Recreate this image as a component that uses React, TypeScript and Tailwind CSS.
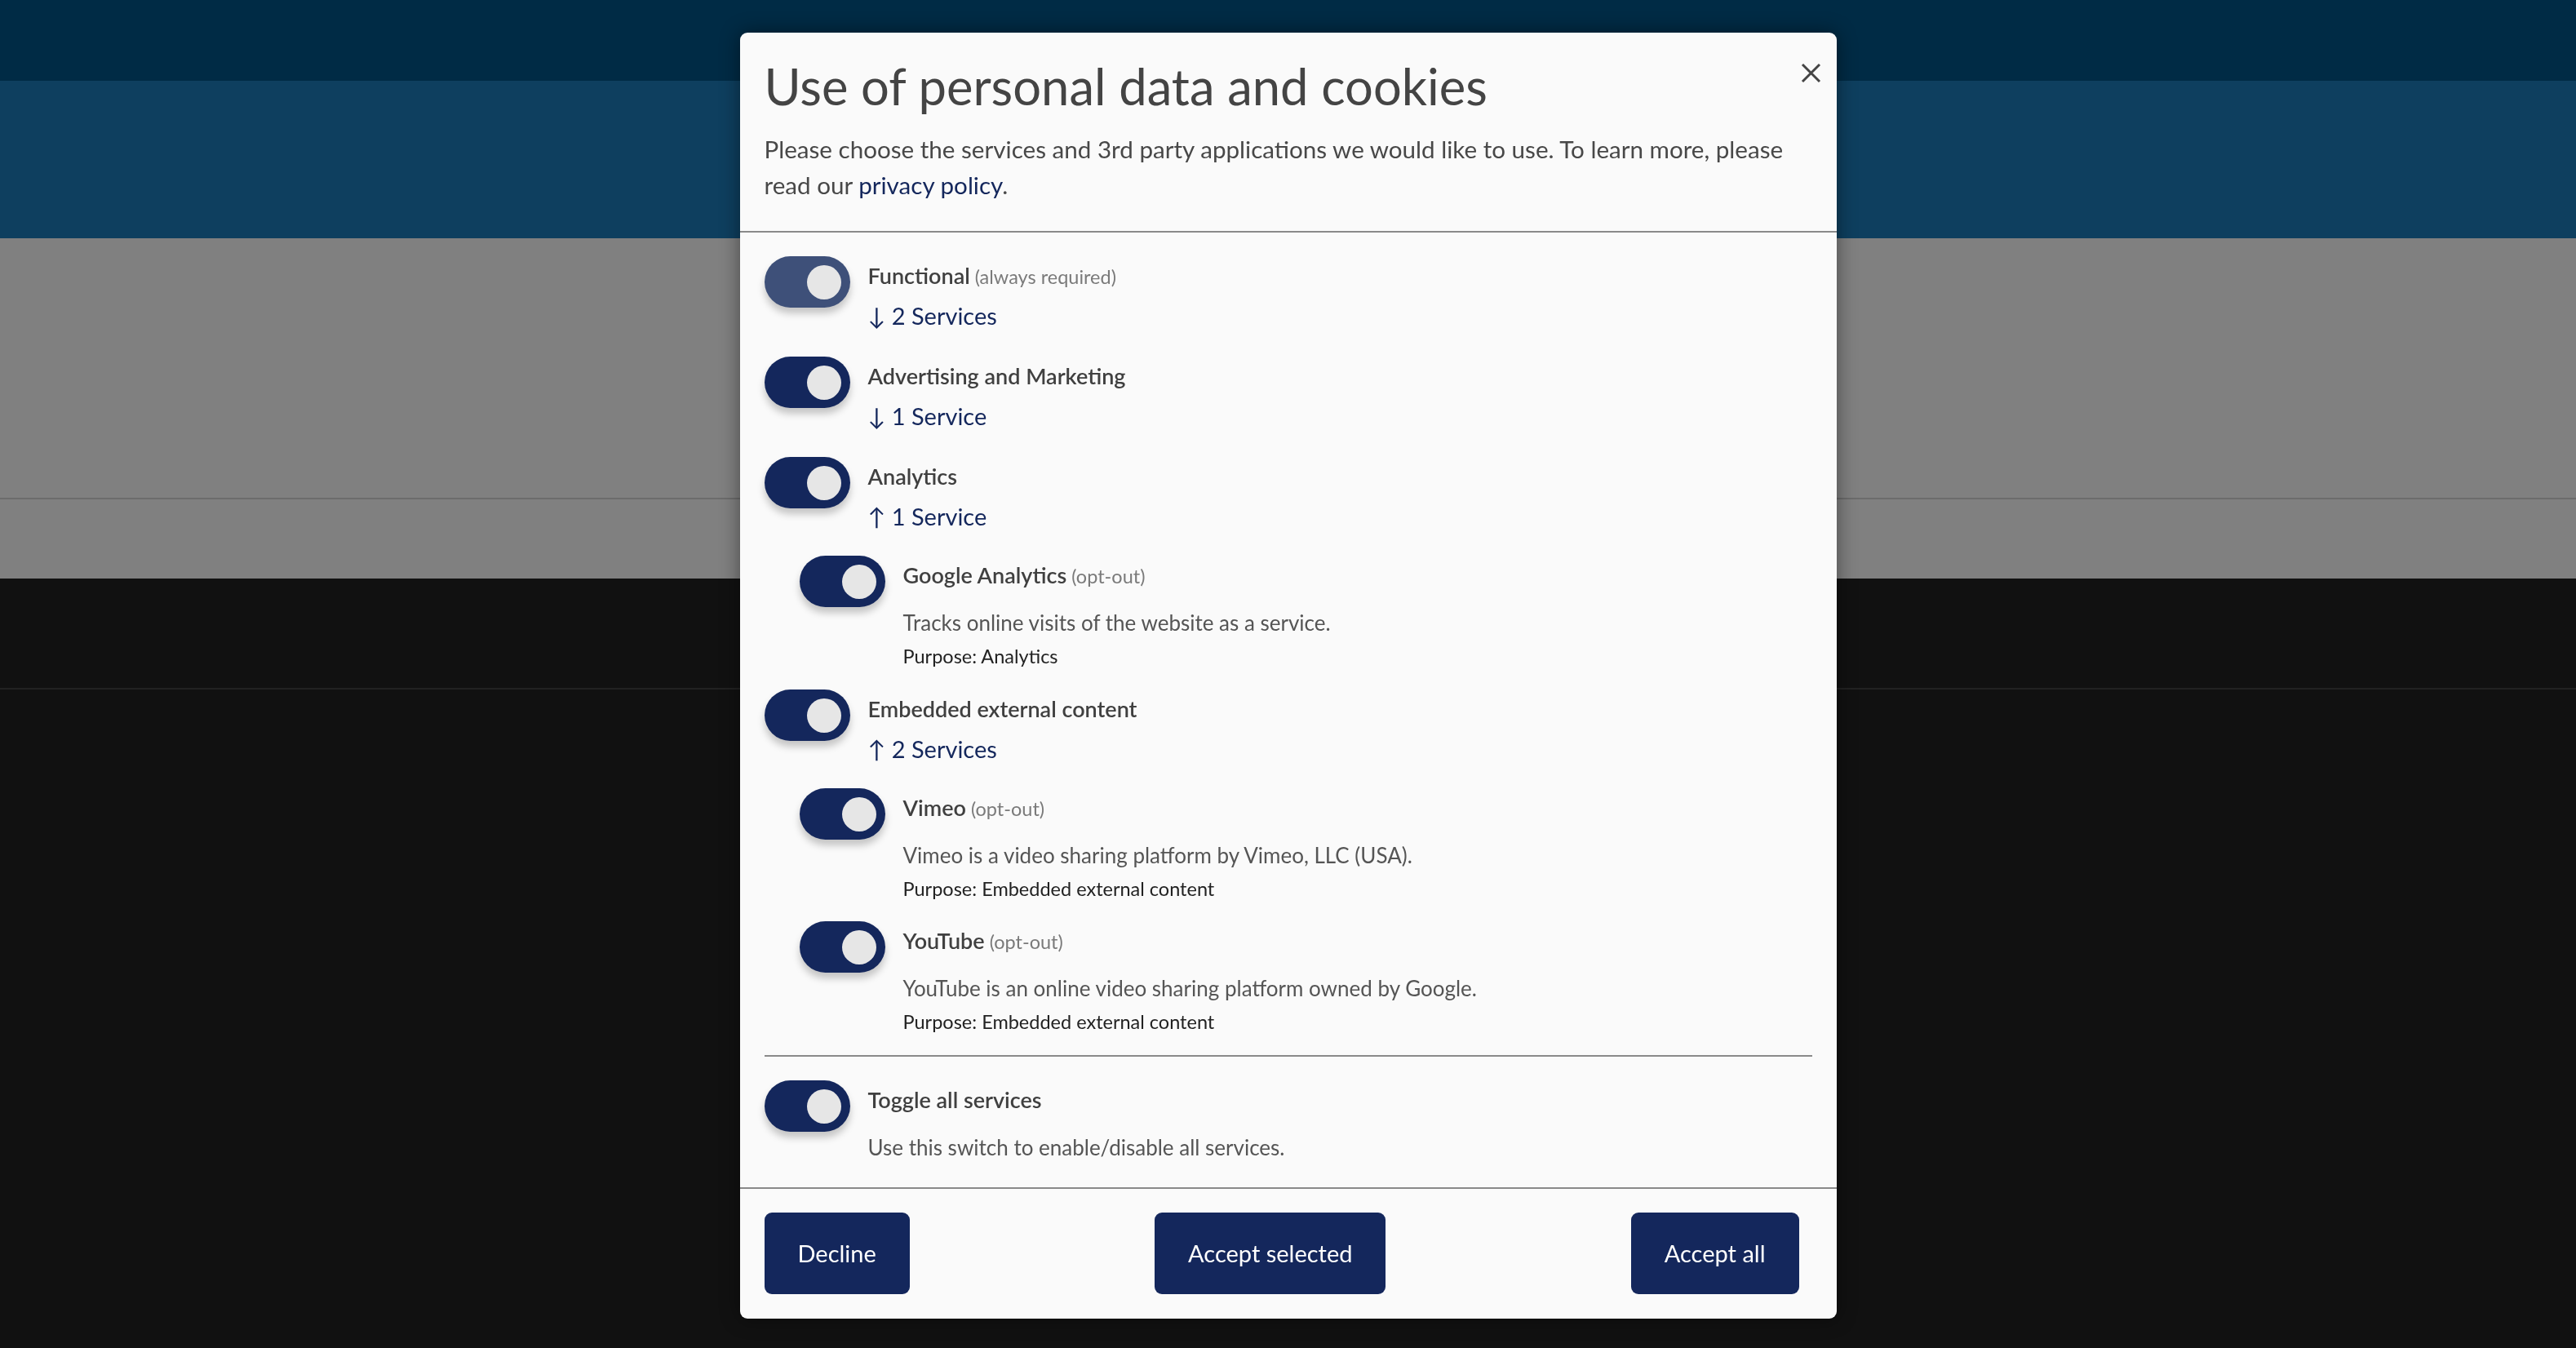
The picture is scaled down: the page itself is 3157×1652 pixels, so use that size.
import { ReactNode } from 'react'

type Service = {
  name: string
  description: string
  purpose: string
}

type Category = {
  title: string
  note?: string
  count: string
  locked?: boolean
  services?: Service[]
}

const categories: Category[] = [
  { title: 'Functional', note: '(always required)', count: '2 Services', locked: true },
  { title: 'Advertising and Marketing', count: '1 Service' },
  {
    title: 'Analytics',
    count: '1 Service',
    services: [
      {
        name: 'Google Analytics',
        description: 'Tracks online visits of the website as a service.',
        purpose: 'Analytics',
      },
    ],
  },
  {
    title: 'Embedded external content',
    count: '2 Services',
    services: [
      {
        name: 'Vimeo',
        description: 'Vimeo is a video sharing platform by Vimeo, LLC (USA).',
        purpose: 'Embedded external content',
      },
      {
        name: 'YouTube',
        description: 'YouTube is an online video sharing platform owned by Google.',
        purpose: 'Embedded external content',
      },
    ],
  },
]

function Toggle({ locked }: { locked?: boolean }) {
  return (
    <span
      className={`flex h-[63px] w-[105px] shrink-0 items-center justify-end rounded-full pr-[11px] shadow-[0_7px_10px_rgba(0,0,0,0.22)] ${
        locked ? 'bg-[#3e5079]' : 'bg-[#14275c]'
      }`}
    >
      <span className="size-[42px] rounded-full bg-[#e6e6e6]" />
    </span>
  )
}

function Title({ children, note }: { children: ReactNode; note?: string }) {
  return (
    <p className="h-[36px] text-[27px] leading-[36px] text-[#404040]">
      <span className="font-semibold">{children}</span>
      {note && <span className="text-[23.5px] leading-none text-[#7a7a7a]"> {note}</span>}
    </p>
  )
}

function ServiceItem({ service }: { service: Service }) {
  return (
    <li className="flex gap-[22px]">
      <Toggle />
      <div className="pt-[6px]">
        <Title note="(opt-out)">{service.name}</Title>
        <p className="mt-[22px] text-[26px] leading-[36px] text-[#555]">{service.description}</p>
        <p className="mt-[9px] text-[23.5px] leading-[28px] text-[#222]">Purpose: {service.purpose}</p>
      </div>
    </li>
  )
}

function CategoryItem({ category }: { category: Category }) {
  const open = !!category.services
  return (
    <li className={open ? 'pb-[27px]' : 'pb-[30px]'}>
      <div className="flex gap-[22px]">
        <Toggle locked={category.locked} />
        <div className="pt-[6px]">
          <Title note={category.note}>{category.title}</Title>
          <p className="mt-[11px] h-[40px] text-[29px] leading-[40px] text-[#14275c]">
            {open ? '↑' : '↓'} {category.count}
          </p>
        </div>
      </div>
      {open && (
        <ul className="mt-[28px] flex flex-col gap-[26px] pl-[43px]">
          {category.services!.map((service) => (
            <ServiceItem key={service.name} service={service} />
          ))}
        </ul>
      )}
    </li>
  )
}

function Button({ children }: { children: ReactNode }) {
  return (
    <button className="h-[100px] rounded-[9px] bg-[#14275c] px-[41px] text-[29px] text-white">
      {children}
    </button>
  )
}

export default function App() {
  return (
    <div className="relative h-[1652px] overflow-hidden bg-[#111111] font-['Lato',sans-serif]">
      <div className="h-[99px] bg-[#002b45]" />
      <div className="h-[193px] bg-[#0e3f5f]" />
      <div className="h-[320px] border-b-2 border-[#6c6c6c] bg-[#808080]" />
      <div className="h-[97px] bg-[#808080]" />
      <div className="h-[136px] border-b-2 border-[#222222]" />

      <div className="fixed inset-0 flex items-center justify-center pt-[4px]">
        <div className="w-[1344px] overflow-hidden rounded-[9px] bg-[#fafafa] shadow-[0_0_24px_rgba(0,0,0,0.45)]">
          <header className="relative border-b-2 border-[#8a8a8a] px-[30px] pt-[28px] pb-[34px]">
            <h1 className="text-[61.5px] leading-[74px] text-[#444]">Use of personal data and cookies</h1>
            <p className="mt-[19px] pr-[6px] text-[29.6px] leading-[44px] text-[#484848]">
              <span>
                Please choose the services and 3rd party applications we would like to use. To learn more,
                please{' '}
              </span>
              <span>read our </span>
              <a className="text-[#14275c]">privacy policy</a>
              <span>.</span>
            </p>
            <button className="absolute top-[37px] right-[19px] text-[#444]" aria-label="Close">
              <svg width="25" height="25" viewBox="0 0 25 25" fill="none" stroke="currentColor" strokeWidth="3">
                <path d="M2 2 L23 23 M23 2 L2 23" />
              </svg>
            </button>
          </header>

          <div className="px-[30px] pt-[29px] pb-[31px]">
            <ul className="flex flex-col">
              {categories.map((category) => (
                <CategoryItem key={category.title} category={category} />
              ))}
            </ul>
            <div className="border-t-2 border-[#8a8a8a] pt-[29px]">
              <div className="flex gap-[22px]">
                <Toggle />
                <div className="pt-[6px]">
                  <p className="text-[27px] leading-[36px] font-semibold text-[#404040]">Toggle all services</p>
                  <p className="mt-[22px] text-[26px] leading-[36px] text-[#555]">
                    Use this switch to enable/disable all services.
                  </p>
                </div>
              </div>
            </div>
          </div>

          <footer className="flex items-center justify-between border-t-2 border-[#8a8a8a] pt-[29px] pr-[46px] pb-[30px] pl-[30px]">
            <Button>Decline</Button>
            <Button>Accept selected</Button>
            <Button>Accept all</Button>
          </footer>
        </div>
      </div>
    </div>
  )
}
